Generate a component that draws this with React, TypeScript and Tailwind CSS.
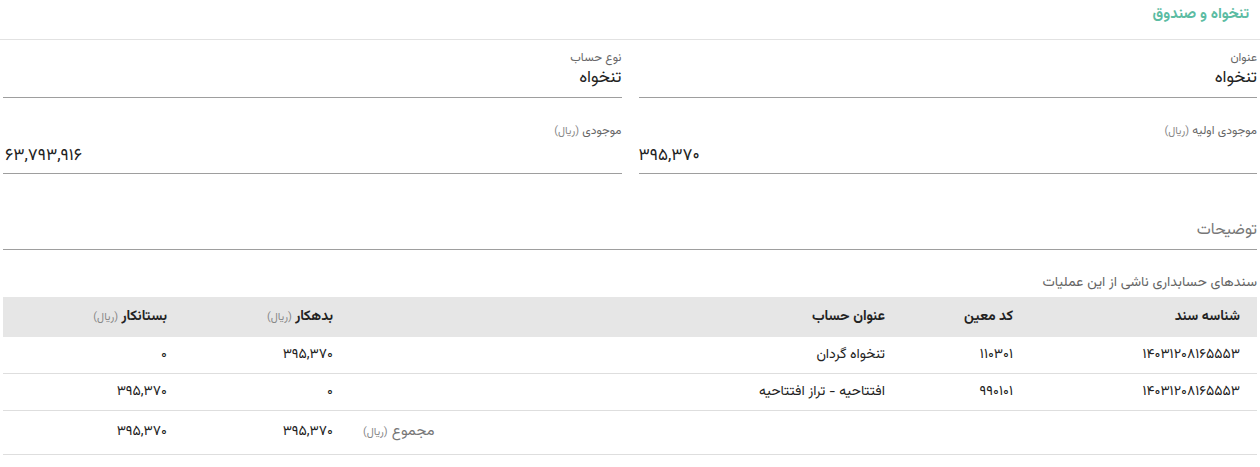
import React from "react";

const rows = [
  { id: "۱۴۰۳۱۲۰۸۱۶۵۵۵۳", code: "۱۱۰۳۰۱", title: "تنخواه گردان", debit: "۳۹۵,۳۷۰", credit: "۰" },
  { id: "۱۴۰۳۱۲۰۸۱۶۵۵۵۳", code: "۹۹۰۱۰۱", title: "افتتاحیه - تراز افتتاحیه", debit: "۰", credit: "۳۹۵,۳۷۰" },
];

function Rial() {
  return <span className="text-[11px] font-normal text-[#888]">(ریال)</span>;
}

export default function App() {
  return (
    <div
      dir="rtl"
      className="w-[1260px] bg-white font-['Vazirmatn','Noto_Sans_Arabic','DejaVu_Sans',sans-serif] text-[#222]"
    >
      <div className="h-[40px] border-b border-[#e2e2e2] pr-[11px] pt-[4px]">
        <h1 className="text-[15px] font-bold leading-[22px] text-[#5cbca3]">تنخواه و صندوق</h1>
      </div>

      <div className="px-[3px]">
        <div className="grid grid-cols-2 gap-x-[17px]">
          <div className="border-b border-[#9e9e9e] pb-[8px] pt-[10px]">
            <div className="text-[12px] leading-[16px] text-[#666]">عنوان</div>
            <div className="mt-[1px] text-[17px] leading-[22px]">تنخواه</div>
          </div>
          <div className="border-b border-[#9e9e9e] pb-[8px] pt-[10px]">
            <div className="text-[12px] leading-[16px] text-[#666]">نوع حساب</div>
            <div className="mt-[1px] text-[17px] leading-[22px]">تنخواه</div>
          </div>
        </div>

        <div className="mt-[15px] grid grid-cols-2 gap-x-[17px]">
          <div className="border-b border-[#9e9e9e] pb-[6px] pt-[10px]">
            <div className="text-[12px] leading-[16px] text-[#666]">
              موجودی اولیه <Rial />
            </div>
            <div dir="ltr" className="mt-[5px] text-left text-[17px] leading-[22px]">۳۹۵,۳۷۰</div>
          </div>
          <div className="border-b border-[#9e9e9e] pb-[6px] pt-[10px]">
            <div className="text-[12px] leading-[16px] text-[#666]">
              موجودی <Rial />
            </div>
            <div dir="ltr" className="mt-[5px] pl-[2px] text-left text-[17px] leading-[22px]">۶۳,۷۹۳,۹۱۶</div>
          </div>
        </div>

        <div className="mt-[46px] border-b border-[#9e9e9e] pb-[7px]">
          <div className="text-[16px] leading-[22px] text-[#777]">توضیحات</div>
        </div>

        <div className="mt-[23px] text-[14px] leading-[20px] text-[#666]">سندهای حسابداری ناشی از این عملیات</div>

        <div className="mt-[4px] text-[14px]">
          <div className="grid h-[40px] grid-cols-[227px_128px_552px_166px_181px] items-center bg-[#e6e6e6] font-bold">
            <div className="pr-[17px]">شناسه سند</div>
            <div className="pr-[17px]">کد معین</div>
            <div className="pr-[17px]">عنوان حساب</div>
            <div className="pr-[17px]">
              بدهکار <Rial />
            </div>
            <div className="pr-[17px]">
              بستانکار <Rial />
            </div>
          </div>
          {rows.map((r, i) => (
            <div
              key={i}
              className="grid h-[37px] grid-cols-[227px_128px_552px_166px_181px] items-center border-b border-[#dedede]"
            >
              <div className="pr-[17px]">{r.id}</div>
              <div className="pr-[17px]">{r.code}</div>
              <div className="pr-[17px]">{r.title}</div>
              <div className="pr-[17px]">{r.debit}</div>
              <div className="pr-[17px]">{r.credit}</div>
            </div>
          ))}
          <div className="grid h-[44px] grid-cols-[227px_128px_552px_166px_181px] items-center border-b border-[#dedede]">
            <div />
            <div />
            <div className="pl-[13px] text-left text-[15px] text-[#777]">
              مجموع <Rial />
            </div>
            <div className="pr-[17px]">۳۹۵,۳۷۰</div>
            <div className="pr-[17px]">۳۹۵,۳۷۰</div>
          </div>
        </div>
      </div>
    </div>
  );
}
